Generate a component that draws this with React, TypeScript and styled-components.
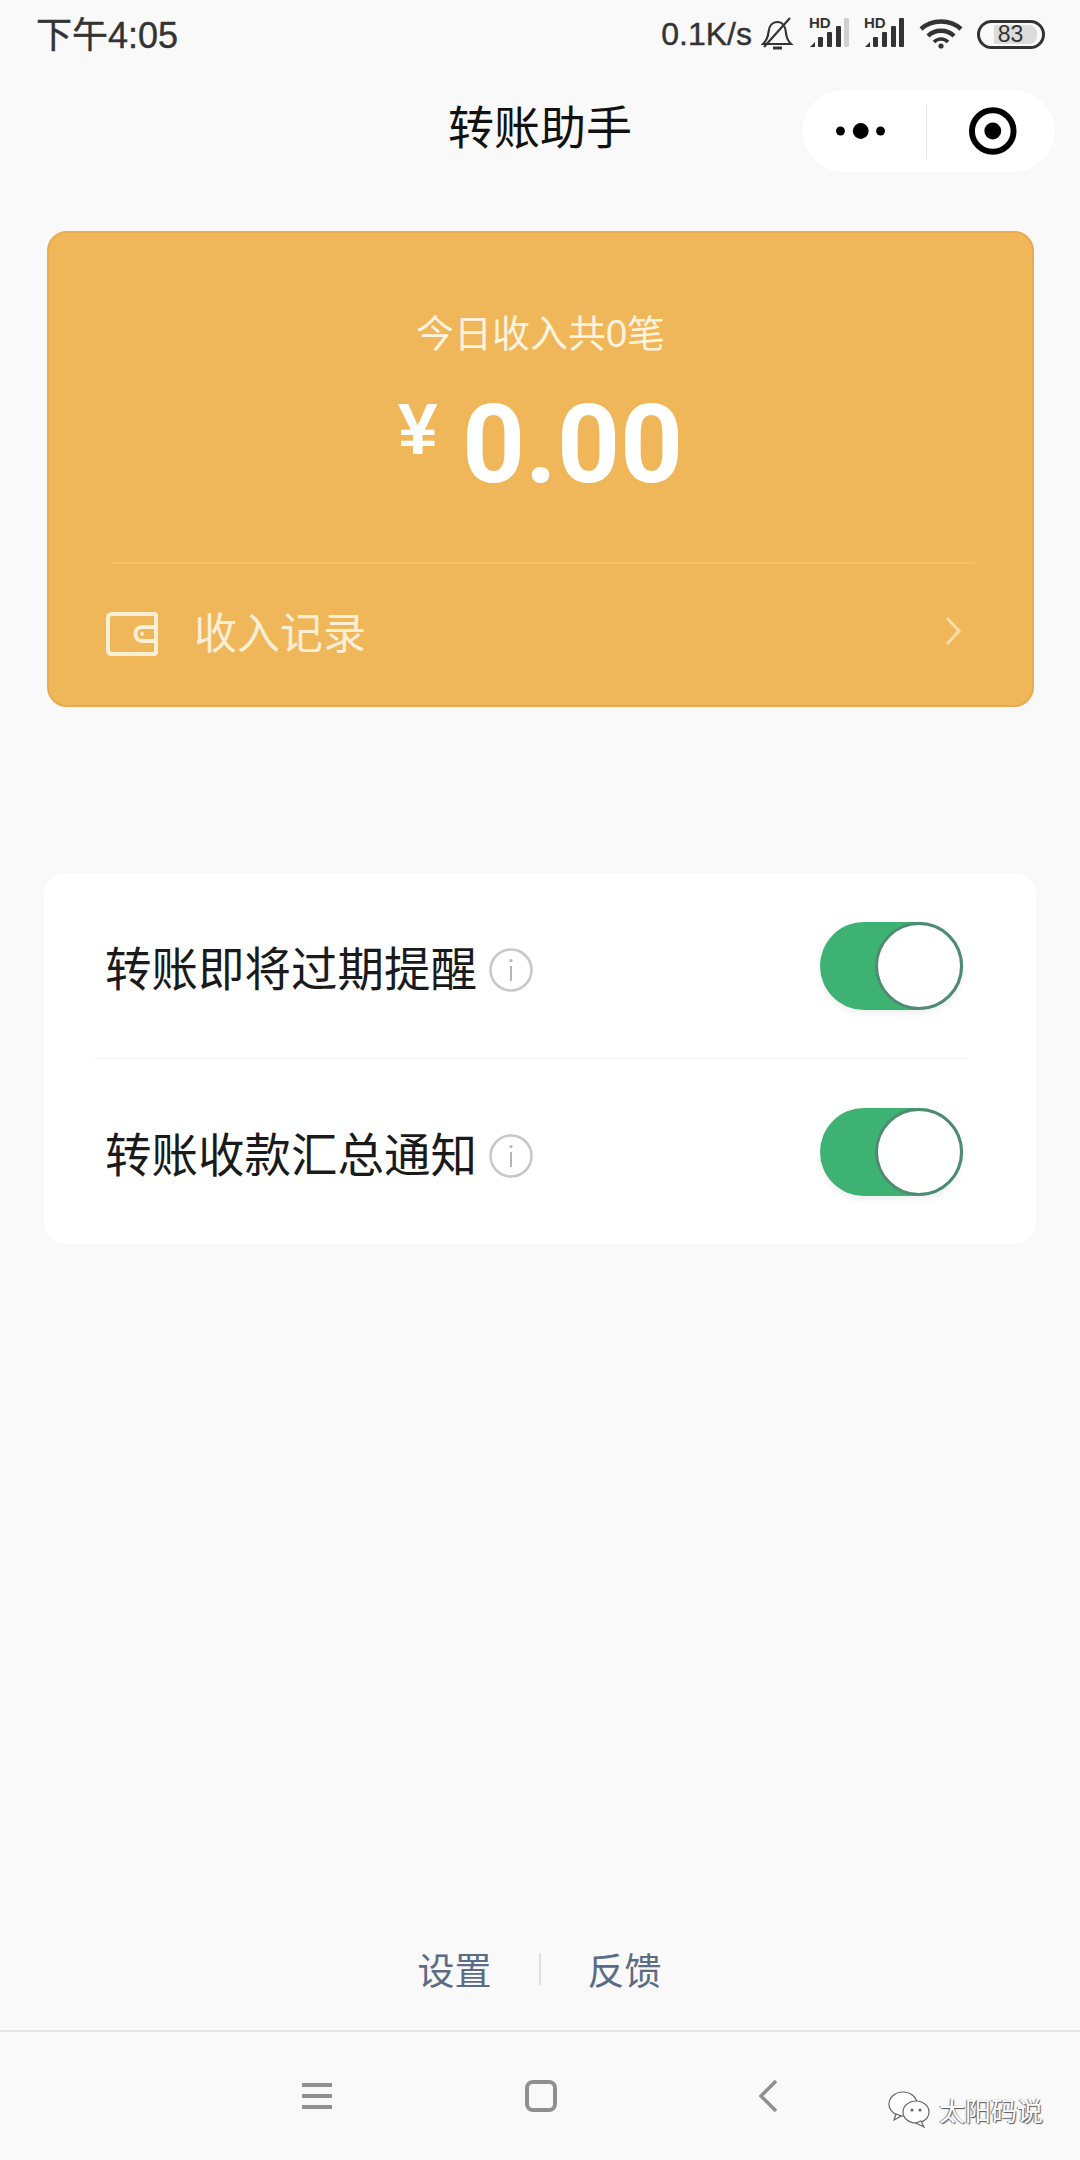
import React from "react";
import styled, { createGlobalStyle } from "styled-components";

const CJK = `"Liberation Sans", "Noto Sans CJK SC", sans-serif`;

const GlobalStyle = createGlobalStyle`
  html, body {
    margin: 0;
    padding: 0;
    background: #f9f9f9;
  }
  * {
    box-sizing: border-box;
  }
`;

const Page = styled.div`
  position: relative;
  display: flex;
  flex-direction: column;
  width: 1080px;
  height: 2160px;
  overflow: hidden;
  background: #f9f9f9;
  font-family: ${CJK};
`;

const StatusBar = styled.div`
  display: flex;
  align-items: center;
  justify-content: space-between;
  height: 68px;
  padding: 0 35px 0 36px;
  color: #333;
`;

const Clock = styled.span`
  margin-bottom: 5px;
  font-size: 36px;
  -webkit-text-stroke: 0.4px #333;
`;

const StatusIcons = styled.div`
  display: flex;
  align-items: center;
  gap: 14px;
`;

const Speed = styled.span`
  font-size: 32px;
  margin-right: -5px;
  -webkit-text-stroke: 0.4px #333;
`;

const Battery = styled.div`
  display: flex;
  align-items: center;
  width: 68px;
  height: 29px;
  padding: 0 5px 0 14px;
  border: 3px solid #333;
  border-radius: 15px;
`;

const BatteryFill = styled.div`
  flex: 1;
  height: 19px;
  background: #dcdcdc;
  border-radius: 0 8px 8px 0;
  font-size: 23px;
  line-height: 19px;
  text-align: center;
  padding-right: 10px;
  color: #333;
`;

const NavBar = styled.div`
  display: grid;
  grid-template-columns: 1fr auto 1fr;
  align-items: center;
  height: 126px;
  padding: 0 25px;
`;

const Title = styled.h1`
  grid-column: 2;
  margin: 0 0 14px;
  font-size: 46px;
  font-weight: 400;
  color: #111;
`;

const Capsule = styled.div`
  grid-column: 3;
  justify-self: end;
  display: flex;
  align-items: center;
  width: 253px;
  height: 82px;
  padding: 0 38px 0 34px;
  background: #fff;
  border-radius: 41px;
  box-shadow: 0 0 2px rgba(0, 0, 0, 0.03);
`;

const CapsuleDivider = styled.div`
  width: 1px;
  height: 55px;
  margin: 0 42px 0 39px;
  background: #e6e6e6;
`;

const IncomeCard = styled.section`
  display: flex;
  flex-direction: column;
  align-items: center;
  height: 476px;
  margin: 37px 46px 0 47px;
  padding-top: 76px;
  background: #f0b65a;
  border: 2px solid #e8ab4e;
  border-radius: 20px;
`;

const IncomeLabel = styled.div`
  height: 50px;
  font-size: 38px;
  line-height: 50px;
  color: #fdf3df;
`;

const Amount = styled.div`
  display: flex;
  align-items: flex-start;
  height: 120px;
  margin-top: 22px;
  color: #fff;
`;

const Yen = styled.span`
  font-size: 72px;
  font-weight: 700;
  line-height: 96px;
  margin-right: 24px;
`;

const AmountValue = styled.span`
  margin-top: 4px;
  font-family: Roboto, sans-serif;
  font-size: 110px;
  font-weight: 700;
  line-height: 120px;
`;

const CardDivider = styled.div`
  align-self: stretch;
  height: 2px;
  margin: 61px 57px 0 63px;
  background: #f6c069;
`;

const RecordRow = styled.div`
  align-self: stretch;
  display: flex;
  align-items: center;
  height: 139px;
  padding: 0 70px 0 57px;
  color: #fcefd6;
`;

const RecordText = styled.span`
  flex: 1;
  margin: 0 0 7px 36px;
  font-size: 43px;
`;

const Chevron = styled.svg`
  margin-bottom: 6px;
`;

const SettingsCard = styled.section`
  margin: 166px 44px 0;
  height: 371px;
  background: #fff;
  border-radius: 22px;
`;

const SettingRow = styled.div<{ $divided?: boolean; $height: number }>`
  display: flex;
  align-items: center;
  height: ${({ $height }) => $height}px;
  margin: 0 68px 0 50px;
  padding: 0 5px 0 11px;
  border-bottom: ${({ $divided }) => ($divided ? "1px solid #f1f1f1" : "none")};
`;

const SettingLabel = styled.span`
  font-size: 46.5px;
  color: #1a1a1a;
`;

const InfoIcon = styled.svg`
  margin: 8px 0 0 12px;
`;

const Toggle = styled.div`
  display: flex;
  justify-content: flex-end;
  width: 143px;
  height: 88px;
  margin-left: auto;
  background: #3eb273;
  border-radius: 44px;
  box-shadow: 0 4px 6px rgba(0, 0, 0, 0.06);
`;

const Knob = styled.div`
  width: 88px;
  height: 88px;
  background: #fff;
  border: 3px solid #4f8a72;
  border-radius: 50%;
`;

const FooterLinks = styled.div`
  display: flex;
  align-items: center;
  justify-content: center;
  gap: 47px;
  height: 50px;
  margin-top: auto;
  margin-bottom: 36px;
  padding-right: 1px;
`;

const FooterLink = styled.span`
  font-size: 37px;
  color: #5c6c86;
`;

const FooterDivider = styled.div`
  width: 2px;
  height: 32px;
  background: #e0e0e0;
`;

const BottomNav = styled.nav`
  display: flex;
  align-items: center;
  height: 130px;
  padding-left: 302px;
  border-top: 2px solid #e4e4e4;
  color: #8f8f8f;
`;

const NavSlot = styled.div<{ $gap?: number }>`
  display: flex;
  margin-left: ${({ $gap }) => $gap ?? 0}px;
`;

const Watermark = styled.div`
  position: absolute;
  left: 888px;
  top: 2090px;
  display: flex;
  align-items: center;
  gap: 8px;
`;

const WatermarkText = styled.span`
  font-size: 26px;
  color: #fff;
  text-shadow: 1px 1px 1px #555, -1px 0 1px #777;
`;

const SignalIcon: React.FC<{ lastColor: string }> = ({ lastColor }) => (
  <svg width="41" height="40" viewBox="0 0 41 40">
    <text x="0" y="14" fontSize="15" fontWeight="700" fontFamily="Liberation Sans" fill="#333">
      HD
    </text>
    <path d="M1 33 L6 28 V33 Z" fill="#333" />
    <rect x="9" y="23" width="5" height="10" rx="1" fill="#333" />
    <rect x="18" y="18" width="5" height="15" rx="1" fill="#333" />
    <rect x="27" y="12" width="5" height="21" rx="1" fill="#333" />
    <rect x="35" y="4" width="5" height="29" rx="1" fill={lastColor} />
  </svg>
);

const InfoBadge: React.FC = () => (
  <InfoIcon width="44" height="44" viewBox="0 0 44 44">
    <circle cx="22" cy="22" r="20.5" fill="none" stroke="#c8c8c8" strokeWidth="2.5" />
    <circle cx="22" cy="12.5" r="1.6" fill="#b5b5b5" />
    <rect x="21" y="18" width="2" height="15" fill="#b5b5b5" />
  </InfoIcon>
);

const SwitchOn: React.FC = () => (
  <Toggle>
    <Knob />
  </Toggle>
);

const App: React.FC = () => {
  return (
    <Page>
      <GlobalStyle />
      <StatusBar>
        <Clock>下午4:05</Clock>
        <StatusIcons>
          <Speed>0.1K/s</Speed>
          <svg width="34" height="34" viewBox="0 0 34 34" fill="none" stroke="#333" strokeWidth="2.2">
            <path d="M2 27 H30 C27 24 25.5 21 25 16 C24.5 9 21 5 16.5 5 C11.5 5 8 9 7.5 15 C7 21 5 24 2 27 Z" />
            <path d="M3 30 L29 1" />
            <path d="M12 31 H21" strokeWidth="3" />
          </svg>
          <SignalIcon lastColor="#cfcfcf" />
          <SignalIcon lastColor="#333" />
          <svg width="44" height="30" viewBox="0 0 44 30" fill="none" stroke="#333" strokeWidth="4.4">
            <path d="M2 10 C13 0 31 0 42 10" />
            <path d="M9 17 C16 10 28 10 35 17" />
            <path d="M15 23 C19 19 25 19 29 23" strokeWidth="3.6" />
            <circle cx="22" cy="27" r="2.6" fill="#333" stroke="none" />
          </svg>
          <Battery>
            <BatteryFill>83</BatteryFill>
          </Battery>
        </StatusIcons>
      </StatusBar>

      <NavBar>
        <Title>转账助手</Title>
        <Capsule>
          <svg width="52" height="18" viewBox="0 0 52 18" fill="#000">
            <circle cx="4.5" cy="9" r="4.5" />
            <circle cx="25" cy="9" r="8" />
            <circle cx="45" cy="9" r="4.5" />
          </svg>
          <CapsuleDivider />
          <svg width="48" height="48" viewBox="0 0 48 48">
            <circle cx="24" cy="24" r="21" fill="none" stroke="#000" strokeWidth="6" />
            <circle cx="24" cy="24" r="8.5" fill="#000" />
          </svg>
        </Capsule>
      </NavBar>

      <IncomeCard>
        <IncomeLabel>今日收入共0笔</IncomeLabel>
        <Amount>
          <Yen>¥</Yen>
          <AmountValue>0.00</AmountValue>
        </Amount>
        <CardDivider />
        <RecordRow>
          <svg width="52" height="44" viewBox="0 0 52 44" fill="none" stroke="#fcefd6" strokeWidth="4">
            <path d="M50 13 V4 C50 2.5 49 2 48 2 H6 C3.5 2 2 3.5 2 6 V38 C2 40.5 3.5 42 6 42 H48 C49 42 50 41.5 50 40 V31" />
            <path d="M50 15 H36 C32 15 29.5 18 29.5 22 C29.5 26 32 29 36 29 H50 Z" />
            <circle cx="36" cy="22" r="2" fill="#fcefd6" stroke="none" />
          </svg>
          <RecordText>收入记录</RecordText>
          <Chevron width="18" height="30" viewBox="0 0 18 30" fill="none" stroke="#f9dca8" strokeWidth="3">
            <path d="M3 2 L15 15 L3 28" />
          </Chevron>
        </RecordRow>
      </IncomeCard>

      <SettingsCard>
        <SettingRow $divided $height={186}>
          <SettingLabel>转账即将过期提醒</SettingLabel>
          <InfoBadge />
          <SwitchOn />
        </SettingRow>
        <SettingRow $height={185}>
          <SettingLabel>转账收款汇总通知</SettingLabel>
          <InfoBadge />
          <SwitchOn />
        </SettingRow>
      </SettingsCard>

      <FooterLinks>
        <FooterLink>设置</FooterLink>
        <FooterDivider />
        <FooterLink>反馈</FooterLink>
      </FooterLinks>

      <BottomNav>
        <NavSlot>
          <svg width="30" height="28" viewBox="0 0 30 28" fill="currentColor">
            <rect y="1" width="30" height="4" />
            <rect y="12" width="30" height="4" />
            <rect y="23" width="30" height="4" />
          </svg>
        </NavSlot>
        <NavSlot $gap={193}>
          <svg width="32" height="32" viewBox="0 0 32 32" fill="none" stroke="currentColor" strokeWidth="4">
            <rect x="2" y="2" width="28" height="28" rx="6" />
          </svg>
        </NavSlot>
        <NavSlot $gap={202}>
          <svg width="18" height="32" viewBox="0 0 18 32" fill="none" stroke="currentColor" strokeWidth="3.4">
            <path d="M17 1 L2 16 L17 31" />
          </svg>
        </NavSlot>
      </BottomNav>

      <Watermark>
        <svg width="43" height="38" viewBox="0 0 43 38" fill="#fff" stroke="#666" strokeWidth="1.2">
          <ellipse cx="15" cy="14" rx="14" ry="12" />
          <path d="M8 24 L6 30 L13 26 Z" />
          <ellipse cx="28" cy="22" rx="13" ry="11" />
          <path d="M33 31 L36 37 L28 33 Z" />
          <circle cx="24" cy="20" r="1" fill="#666" />
          <circle cx="32" cy="20" r="1" fill="#666" />
        </svg>
        <WatermarkText>太阳码说</WatermarkText>
      </Watermark>
    </Page>
  );
};

export default App;
